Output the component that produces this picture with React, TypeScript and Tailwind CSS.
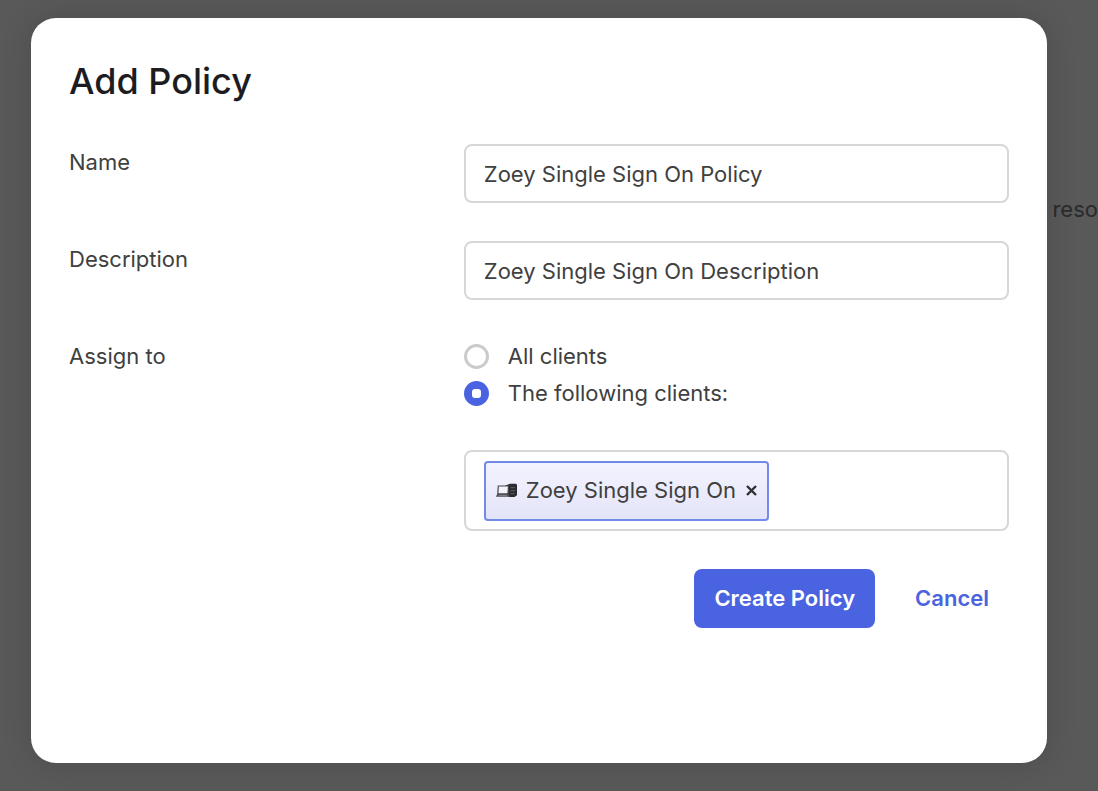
import { useState, type ReactNode } from "react";

interface FormRowProps {
  label: string;
  htmlFor?: string;
  labelId?: string;
  children: ReactNode;
}

const INPUT_CLASS =
  "w-full h-[59px] rounded-lg border-2 border-[#d7d7d7] bg-white px-[18px] text-[22px] text-[#404040] outline-none focus:border-[#4a63e0]";

const RADIO_CLASS =
  "flex h-[25px] w-[25px] shrink-0 appearance-none items-center justify-center rounded-full border-[3px] border-[#cbcbcb] bg-white checked:border-[#4a63e0] checked:bg-[#4a63e0] checked:before:h-[9px] checked:before:w-[9px] checked:before:rounded-[3px] checked:before:bg-white checked:before:content-['']";

function FormRow({ label, htmlFor, labelId, children }: FormRowProps) {
  const labelClass = "text-[22px] leading-[37px] text-[#404040]";

  return (
    <div className="grid grid-cols-[42%_58%]">
      <div className="leading-[37px]">
        {htmlFor ? (
          <label htmlFor={htmlFor} className={labelClass}>
            {label}
          </label>
        ) : (
          <span id={labelId} className={labelClass}>
            {label}
          </span>
        )}
      </div>
      <div>{children}</div>
    </div>
  );
}

function ClientIcon() {
  return (
    <svg viewBox="0 0 22 16" className="h-4 w-[22px] shrink-0" fill="none" aria-hidden="true">
      <path d="M9.5 2.4 14 .8h6l1 1v10.4L18.5 14H13l-2-2Z" fill="#2b2b2f" />
      <path d="M14.5 4.7h4.5M14.5 7.7h4.5M14.5 10.7h4" stroke="#77777d" strokeWidth=".7" />
      <path d="M2.3 3h10.2l-.5 7.8H1.8Z" fill="#f2f2fa" stroke="#47474b" strokeWidth="1.2" />
      <path d="M1.2 11h11.6l1 2.8H0Z" fill="#4b4b50" />
      <path d="M2.5 12.4h8.5" stroke="#aaaab2" strokeWidth=".6" />
    </svg>
  );
}

export default function App() {
  const [name, setName] = useState("Zoey Single Sign On Policy");
  const [description, setDescription] = useState("Zoey Single Sign On Description");
  const [assignTo, setAssignTo] = useState("following");
  const [clients, setClients] = useState(["Zoey Single Sign On"]);

  return (
    <div className="relative min-h-screen bg-[#595959] font-['Inter',sans-serif]">
      {/* Page behind the dialog */}
      <div className="absolute inset-x-0 top-[196px] overflow-hidden text-right text-[22px] leading-[26px] text-[#2b2b2b]">
        <a href="#" className="text-[#1d4770]">
          s
        </a>{" "}
        reso
      </div>

      <div className="relative flex min-h-screen pt-[18px] pr-[51px] pb-7 pl-[31px]">
        <div
          role="dialog"
          aria-labelledby="dialog-title"
          className="flex-1 rounded-[25px] bg-white p-[38px] shadow-[0_0_30px_rgba(0,0,0,0.15)]"
        >
          <h1 id="dialog-title" className="text-[36px] leading-[50px] font-medium text-[#1d1d21]">
            Add Policy
          </h1>

          <form className="mt-[38px] flex flex-col gap-[38px]" onSubmit={(e) => e.preventDefault()}>
            <FormRow label="Name" htmlFor="name">
              <input
                id="name"
                type="text"
                value={name}
                onChange={(e) => setName(e.target.value)}
                className={INPUT_CLASS}
              />
            </FormRow>

            <FormRow label="Description" htmlFor="description">
              <input
                id="description"
                type="text"
                value={description}
                onChange={(e) => setDescription(e.target.value)}
                className={INPUT_CLASS}
              />
            </FormRow>

            <FormRow label="Assign to" labelId="assign-label">
              <div role="radiogroup" aria-labelledby="assign-label" className="text-[22px] leading-[37px] text-[#404040]">
                <label className="flex items-center gap-[19px]">
                  <input
                    type="radio"
                    name="assign"
                    checked={assignTo === "all"}
                    onChange={() => setAssignTo("all")}
                    className={RADIO_CLASS}
                  />
                  All clients
                </label>
                <label className="flex items-center gap-[19px]">
                  <input
                    type="radio"
                    name="assign"
                    checked={assignTo === "following"}
                    onChange={() => setAssignTo("following")}
                    className={RADIO_CLASS}
                  />
                  The following clients:
                </label>
              </div>

              {/* Selected clients */}
              <div className="mt-[38px] flex min-h-[81px] flex-wrap items-center gap-2 rounded-lg border-2 border-[#d7d7d7] px-[18px] py-2">
                {clients.map((client) => (
                  <span
                    key={client}
                    className="flex h-[60px] items-center rounded-[4px] border-2 border-[#728ae8] bg-linear-to-b from-[#f3f3fe] to-[#e4e4f9] px-2.5 text-[22px] text-[#404040]"
                  >
                    <ClientIcon />
                    <span className="ml-2">{client}</span>
                    <button
                      type="button"
                      onClick={() => setClients(clients.filter((c) => c !== client))}
                      className="ml-2.5 text-[#303034]"
                      aria-label={`Remove ${client}`}
                    >
                      <svg viewBox="0 0 11 11" className="h-[11px] w-[11px]" stroke="currentColor" strokeWidth="2.4">
                        <path d="M1 1l9 9M10 1l-9 9" />
                      </svg>
                    </button>
                  </span>
                ))}
              </div>
            </FormRow>

            <div className="flex justify-end gap-5 text-[22px]">
              <button type="submit" className="h-[59px] rounded-lg bg-[#4a63e0] px-5 font-semibold text-white">
                Create Policy
              </button>
              <button type="button" className="h-[59px] rounded-lg px-5 font-semibold text-[#4a63e0]">
                Cancel
              </button>
            </div>
          </form>
        </div>
      </div>
    </div>
  );
}
